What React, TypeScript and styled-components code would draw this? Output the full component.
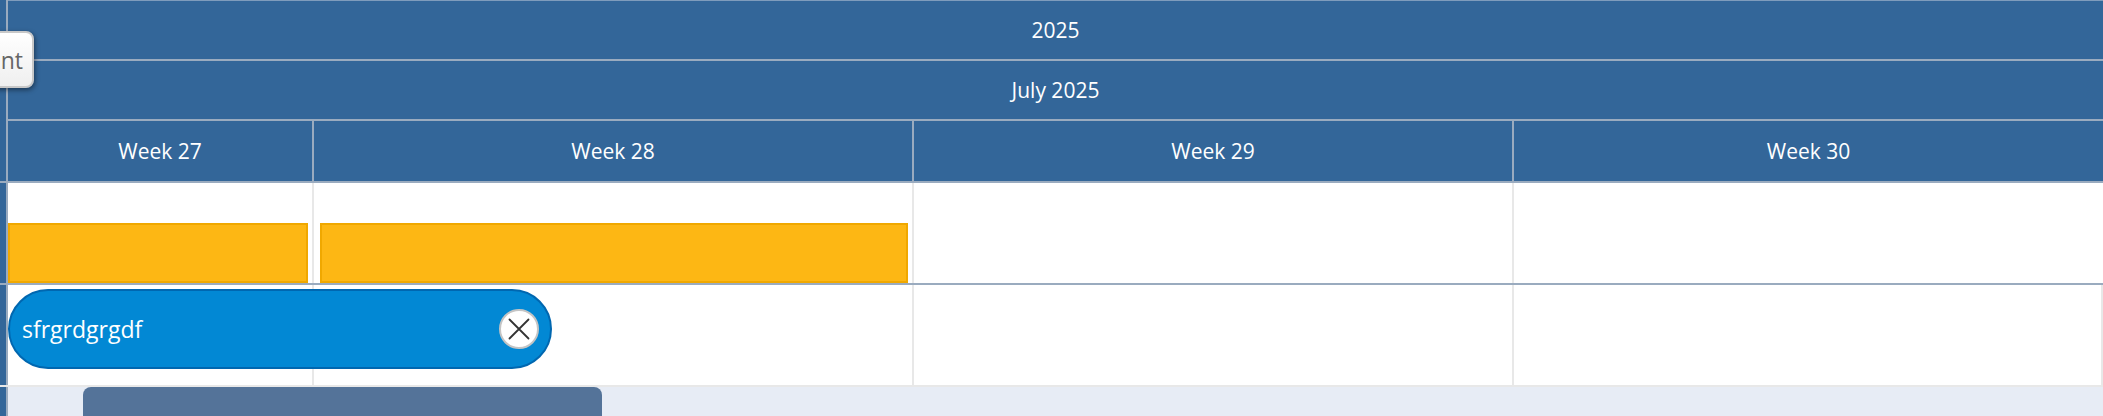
import { createGlobalStyle } from 'styled-components';
import styled from 'styled-components';

const weeks = [
  { label: 'Week 27', width: 306 },
  { label: 'Week 28', width: 600 },
  { label: 'Week 29', width: 600 },
  { label: 'Week 30', width: 589 },
];

export default function App() {
  return (
    <>
      <GlobalStyle />
      <StyledPage>
        <StyledHeader>
          <StyledStrip />
          <StyledHeaderRows>
            <StyledBand>2025</StyledBand>
            <StyledBand>July 2025</StyledBand>
            <StyledWeekRow>
              {weeks.map((week) => (
                <StyledWeek key={week.label} $width={week.width}>
                  {week.label}
                </StyledWeek>
              ))}
            </StyledWeekRow>
          </StyledHeaderRows>
        </StyledHeader>

        <StyledRow>
          <StyledStrip />
          <StyledCells>
            <StyledCell $width={weeks[0].width} $left={0} $right={4}>
              <StyledBar />
            </StyledCell>
            <StyledCell $width={weeks[1].width} $left={6} $right={4}>
              <StyledBar />
            </StyledCell>
            <StyledCell $width={weeks[2].width} />
            <StyledCell $width={weeks[3].width} />
          </StyledCells>
        </StyledRow>

        <StyledRow>
          <StyledStrip />
          <StyledCells>
            <StyledCell $width={weeks[0].width} />
            <StyledCell $width={weeks[1].width} />
            <StyledCell $width={weeks[2].width} />
            <StyledCell $width={weeks[3].width} />
            <StyledPill>
              <StyledPillLabel>sfrgrdgrgdf</StyledPillLabel>
              <StyledClose aria-label="Remove">
                <svg width="22" height="22" viewBox="0 0 22 22">
                  <path
                    d="M1.5 1.5 L20.5 20.5 M20.5 1.5 L1.5 20.5"
                    stroke="#333"
                    strokeWidth="1.8"
                    strokeLinecap="round"
                  />
                </svg>
              </StyledClose>
            </StyledPill>
          </StyledCells>
        </StyledRow>

        <StyledScrollRow>
          <StyledStrip />
          <StyledTrack>
            <StyledThumb />
          </StyledTrack>
        </StyledScrollRow>

        <StyledFloatingButton>Event</StyledFloatingButton>
      </StyledPage>
    </>
  );
}

const GlobalStyle = createGlobalStyle`
  html, body {
    margin: 0;
    padding: 0;
    background: #fff;
    overflow: hidden;
  }

  * {
    box-sizing: border-box;
  }
`;

const StyledPage = styled.div`
  position: relative;
  width: 2103px;
  height: 416px;
  overflow: hidden;
  display: flex;
  flex-direction: column;
  font-family: 'Open Sans', 'Noto Sans', sans-serif;
  font-size: 21px;
`;

const StyledHeader = styled.div`
  display: flex;
  height: 183px;
  flex-shrink: 0;
  background: #336699;
  border-bottom: 2px solid #9aabbf;
`;

const StyledStrip = styled.div`
  width: 8px;
  flex-shrink: 0;
  background: #336699;
  border-right: 2px solid #9aabbf;
`;

const StyledHeaderRows = styled.div`
  flex-grow: 1;
  display: flex;
  flex-direction: column;
  border-top: 1px solid #7f9cbc;
`;

const StyledBand = styled.div`
  height: 60px;
  flex-shrink: 0;
  display: flex;
  align-items: center;
  justify-content: center;
  color: #fff;
  border-bottom: 2px solid #9aabbf;
`;

const StyledWeekRow = styled.div`
  flex-grow: 1;
  display: flex;
`;

const StyledWeek = styled.div<{ $width: number }>`
  width: ${(p) => p.$width}px;
  flex-shrink: 0;
  display: flex;
  align-items: center;
  justify-content: center;
  color: #fff;
  border-right: 2px solid #9aabbf;

  &:last-child {
    border-right: none;
  }
`;

const StyledRow = styled.div`
  display: flex;
  height: 102px;
  flex-shrink: 0;
  border-bottom: 2px solid #9aabbf;

  &:nth-child(3) {
    border-bottom: 2px solid #e8e8e8;
  }
`;

const StyledCells = styled.div`
  position: relative;
  flex-grow: 1;
  display: flex;
`;

const StyledCell = styled.div<{ $width: number; $left?: number; $right?: number }>`
  width: ${(p) => p.$width}px;
  flex-shrink: 0;
  display: flex;
  align-items: flex-end;
  padding: 0 ${(p) => p.$right ?? 0}px 0 ${(p) => p.$left ?? 0}px;
  border-right: 2px solid #e8e8e8;

  &:last-of-type {
    border-right: none;
  }
`;

const StyledBar = styled.div`
  flex-grow: 1;
  height: 60px;
  background: #fdb714;
  border: 2px solid #f0a800;
`;

const StyledPill = styled.div`
  position: absolute;
  left: 0;
  top: 4px;
  width: 544px;
  height: 80px;
  display: flex;
  align-items: center;
  justify-content: space-between;
  padding: 0 11px 0 12px;
  border-radius: 40px;
  background: #0288d4;
  border: 2px solid #0067b0;
`;

const StyledPillLabel = styled.span`
  color: #fff;
  font-size: 23px;
`;

const StyledClose = styled.button`
  width: 40px;
  height: 40px;
  display: flex;
  align-items: center;
  justify-content: center;
  padding: 0;
  border-radius: 50%;
  background: #fff;
  border: 2px solid #c4c4c4;
`;

const StyledScrollRow = styled.div`
  display: flex;
  flex-grow: 1;
`;

const StyledTrack = styled.div`
  flex-grow: 1;
  padding-left: 75px;
  background: #e7ecf5;
`;

const StyledThumb = styled.div`
  width: 519px;
  height: 40px;
  background: #547399;
  border-radius: 8px;
`;

const StyledFloatingButton = styled.div`
  position: absolute;
  right: calc(100% - 34px);
  top: 31px;
  height: 57px;
  display: flex;
  align-items: center;
  padding: 0 9px 0 12px;
  white-space: nowrap;
  color: #666;
  font-size: 23px;
  background: linear-gradient(#ffffff, #efefef);
  border: 2px solid #c8c8c8;
  border-radius: 8px;
  box-shadow: 1px 2px 5px rgba(0, 0, 0, 0.45);
`;
